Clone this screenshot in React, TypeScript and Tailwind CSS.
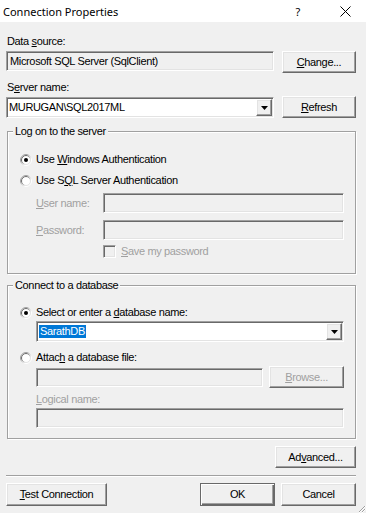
import React from "react";

const sunken =
  "border border-t-[#a0a0a0] border-l-[#a0a0a0] border-b-white border-r-white shadow-[inset_1px_1px_0_#696969,inset_-1px_-1px_0_#e3e3e3]";
const raised =
  "border border-t-white border-l-white border-b-[#696969] border-r-[#696969] shadow-[inset_-1px_-1px_0_#a0a0a0,inset_1px_1px_0_#e3e3e3]";

function Radio({ checked }: { checked?: boolean }) {
  return (
    <svg width="12" height="12" viewBox="0 0 12 12" className="shrink-0">
      <defs>
        <linearGradient id="ro" x1="0" y1="0" x2="1" y2="1">
          <stop offset="0.3" stopColor="#a0a0a0" />
          <stop offset="0.7" stopColor="#ffffff" />
        </linearGradient>
        <linearGradient id="ri" x1="0" y1="0" x2="1" y2="1">
          <stop offset="0.3" stopColor="#696969" />
          <stop offset="0.7" stopColor="#e3e3e3" />
        </linearGradient>
      </defs>
      <circle cx="6" cy="6" r="5.5" fill="none" stroke="url(#ro)" />
      <circle cx="6" cy="6" r="4.5" fill="#fff" stroke="url(#ri)" />
      {checked && <circle cx="6" cy="6" r="2" fill="#000" />}
    </svg>
  );
}

function Button({ children, className = "" }: { children: React.ReactNode; className?: string }) {
  return (
    <div className={`flex items-center justify-center bg-[#f0f0f0] ${raised} ${className}`}>
      {children}
    </div>
  );
}

function Combo({ children, className = "" }: { children?: React.ReactNode; className?: string }) {
  return (
    <div className={`flex items-stretch bg-white ${sunken} ${className}`}>
      <div className="flex flex-1 items-center pl-[2px]">{children}</div>
      <div className={`w-[16px] my-[1px] mr-[1px] flex items-center justify-center bg-[#f0f0f0] ${raised}`}>
        <svg width="7" height="4" viewBox="0 0 7 4">
          <path d="M0 0h7L3.5 4z" fill="#000" />
        </svg>
      </div>
    </div>
  );
}

function Group({ title, className = "", children }: { title: string; className?: string; children: React.ReactNode }) {
  return (
    <div className={`ml-[1px] w-[349px] border border-[#a0a0a0] shadow-[inset_1px_1px_0_#fff,1px_1px_0_#fff] ${className}`}>
      <span className="block w-fit -mt-[7px] ml-[5px] px-[2px] h-[13px] leading-[13px] bg-[#f0f0f0] text-black">
        {title}
      </span>
      {children}
    </div>
  );
}

export default function App() {
  return (
    <div className="w-[366px] h-[513px] bg-[#f0f0f0] text-[11px] leading-[13px] tracking-[-0.35px] text-black font-['Liberation_Sans',Arial,sans-serif] overflow-hidden relative">
      {/* title bar */}
      <div className="h-[22px] bg-white flex items-center pl-[3px] font-['Noto_Sans',sans-serif] text-[11px] tracking-normal">
        <span>Connection Properties</span>
        <span className="ml-auto w-[10px] text-center">?</span>
        <svg width="11" height="11" viewBox="0 0 11 11" className="ml-[37px] mr-[15px]">
          <path d="M0.5 0.5l10 10M10.5 0.5l-10 10" stroke="#000" strokeWidth="1" />
        </svg>
      </div>

      <div className="px-[6px] w-[362px]">
        <div className="mt-[13px] ml-[1px] h-[13px]">
          Data <u>s</u>ource:
        </div>
        <div className="mt-[3px] flex items-start gap-[8px]">
          <div className={`w-[268px] h-[20px] flex items-center pl-[3px] bg-[#f0f0f0] ${sunken}`}>
            Microsoft SQL Server (SqlClient)
          </div>
          <Button className="w-[74px] h-[22px]">
            <span><u>C</u>hange...</span>
          </Button>
        </div>

        <div className="mt-[8px] ml-[1px] h-[13px]">
          S<u>e</u>rver name:
        </div>
        <div className="mt-[2px] flex items-start gap-[8px]">
          <Combo className="w-[268px] h-[21px] mt-[1px]">MURUGAN\SQL2017ML</Combo>
          <Button className="w-[74px] h-[22px]">
            <span><u>R</u>efresh</span>
          </Button>
        </div>

        <Group title="Log on to the server" className="mt-[13px] h-[143px]">
          <div className="mt-[15px] h-[13px] flex items-center pl-[12px] gap-[4px]">
            <Radio checked />
            <span>Use <u>W</u>indows Authentication</span>
          </div>
          <div className="mt-[8px] h-[13px] flex items-center pl-[12px] gap-[4px]">
            <Radio />
            <span>Use S<u>Q</u>L Server Authentication</span>
          </div>
          <div className="mt-[6px] flex items-center pl-[28px] text-[#a0a0a0]">
            <span className="w-[67px]"><u>U</u>ser name:</span>
            <div className={`w-[241px] h-[20px] bg-[#f0f0f0] ${sunken}`} />
          </div>
          <div className="mt-[7px] flex items-center pl-[28px] text-[#a0a0a0]">
            <span className="w-[67px]"><u>P</u>assword:</span>
            <div className={`w-[241px] h-[20px] bg-[#f0f0f0] ${sunken}`} />
          </div>
          <div className="mt-[5px] h-[13px] flex items-center pl-[95px] gap-[5px] text-[#a0a0a0]">
            <div className={`w-[13px] h-[13px] bg-[#f0f0f0] ${sunken}`} />
            <span><u>S</u>ave my password</span>
          </div>
        </Group>

        <Group title="Connect to a database" className="mt-[11px] h-[154px]">
          <div className="mt-[14px] h-[13px] flex items-center pl-[12px] gap-[4px]">
            <Radio checked />
            <span>Select or enter a <u>d</u>atabase name:</span>
          </div>
          <Combo className="mt-[2px] ml-[28px] w-[308px] h-[21px]">
            <span className="bg-[#0078d7] text-white px-[1px]">SarathDB</span>
          </Combo>
          <div className="mt-[9px] h-[13px] flex items-center pl-[12px] gap-[4px]">
            <Radio />
            <span>Attac<u>h</u> a database file:</span>
          </div>
          <div className="mt-[2px] ml-[28px] flex items-start gap-[6px]">
            <div className={`mt-[2px] w-[227px] h-[19px] bg-[#f0f0f0] ${sunken}`} />
            <Button className="w-[75px] h-[22px] text-[#a0a0a0]">
              <span><u>B</u>rowse...</span>
            </Button>
          </div>
          <div className="mt-[5px] ml-[28px] h-[13px] text-[#a0a0a0]">
            <u>L</u>ogical name:
          </div>
          <div className={`mt-[2px] ml-[28px] w-[308px] h-[20px] bg-[#f0f0f0] ${sunken}`} />
        </Group>

        <div className="mt-[7px] flex justify-end">
          <Button className="w-[81px] h-[22px]">
            <span>Ad<u>v</u>anced...</span>
          </Button>
        </div>

        <div className="mt-[7px] h-[2px] w-[350px] border-t border-[#a0a0a0] border-b border-b-white" />

        <div className="mt-[6px] flex items-start">
          <Button className="w-[101px] h-[23px]">
            <span><u>T</u>est Connection</span>
          </Button>
          <div className="ml-auto flex gap-[6px]">
            <div className="w-[75px] h-[23px] flex items-center justify-center bg-[#f0f0f0] border border-[#696969] shadow-[inset_1px_1px_0_#fff,inset_-1px_-1px_0_#696969,inset_-2px_-2px_0_#a0a0a0]">
              OK
            </div>
            <Button className="w-[75px] h-[23px]">
              <span>Cancel</span>
            </Button>
          </div>
        </div>
      </div>

      {/* resize grip */}
      <svg width="10" height="10" viewBox="0 0 10 10" className="absolute right-0 bottom-0">
        <path d="M9 3L3 9M9 6L6 9" stroke="#a0a0a0" strokeWidth="1" />
        <path d="M10 3L3 10M10 6L6 10" stroke="#fff" strokeWidth="1" />
      </svg>
    </div>
  );
}
